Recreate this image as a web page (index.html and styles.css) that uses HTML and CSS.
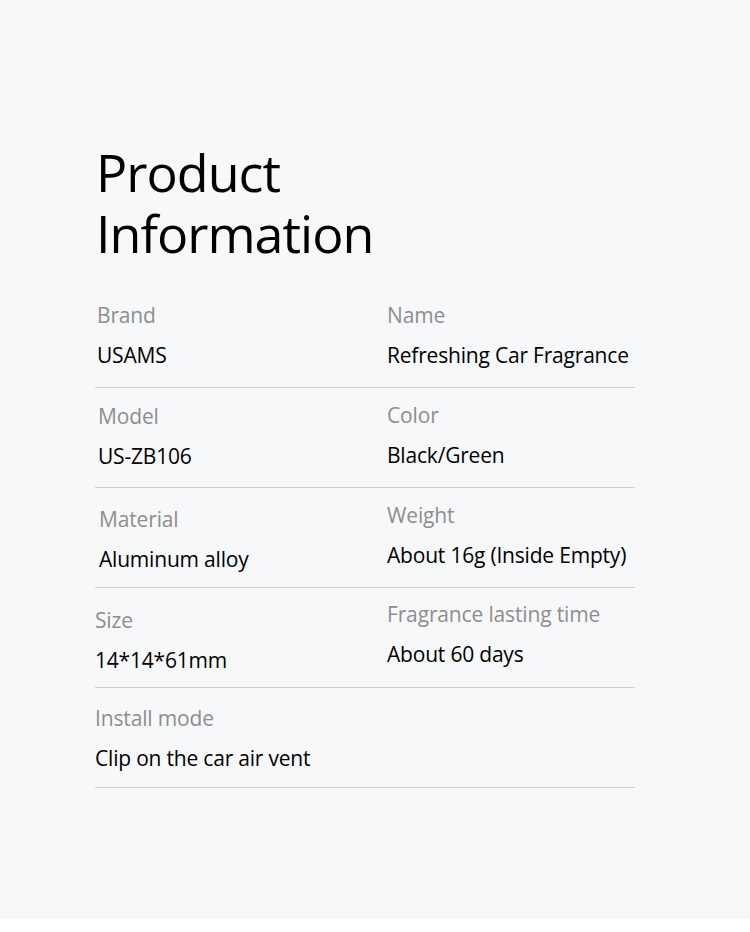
FILE: index.html
```html
<!DOCTYPE html>
<html lang="en">
<head>
<meta charset="utf-8">
<title>Product Information</title>
<link rel="stylesheet" href="styles.css">
</head>
<body>
<main class="panel">
  <h1 class="title"><span class="title-line">Product</span><span class="title-line">Information</span></h1>
  <section class="specs">
    <div class="row">
      <div class="cell cell--r1"><div class="label">Brand</div><div class="value">USAMS</div></div>
      <div class="cell"><div class="label">Name</div><div class="value">Refreshing Car Fragrance</div></div>
    </div>
    <div class="row">
      <div class="cell cell--r2"><div class="label">Model</div><div class="value">US-ZB106</div></div>
      <div class="cell"><div class="label">Color</div><div class="value">Black/Green</div></div>
    </div>
    <div class="row">
      <div class="cell cell--r3"><div class="label">Material</div><div class="value">Aluminum alloy</div></div>
      <div class="cell"><div class="label">Weight</div><div class="value">About 16g (Inside Empty)</div></div>
    </div>
    <div class="row">
      <div class="cell cell--r4"><div class="label">Size</div><div class="value">14*14*61mm</div></div>
      <div class="cell cell--up"><div class="label">Fragrance lasting time</div><div class="value">About 60 days</div></div>
    </div>
    <div class="row">
      <div class="cell cell--r5"><div class="label">Install mode</div><div class="value">Clip on the car air vent</div></div>
    </div>
  </section>
</main>
</body>
</html>
```

FILE: styles.css
```css
html, body {
  margin: 0;
  padding: 0;
  background: #ffffff;
}

body {
  font-family: "Open Sans", "Noto Sans", "Liberation Sans", sans-serif;
  color: #000;
}

.panel {
  height: 919px;
  background: #f7f8fa;
  padding: 141px 0 0 95px;
  box-sizing: border-box;
}

.title {
  margin: 0 0 0 1px;
  font-weight: 400;
  font-size: 52px;
  line-height: 61px;
  letter-spacing: -1px;
  color: #000;
}

.title-line {
  display: block;
  height: 61px;
}

.specs {
  width: 540px;
  margin-top: 25px;
}

.row {
  display: grid;
  grid-template-columns: 292px 1fr;
  height: 99px;
  border-bottom: 1px solid #cfcfd1;
}

.cell {
  padding-top: 13px;
}

.cell--r1 { padding-left: 2px; }
.cell--r2 { padding-left: 3px; padding-top: 14px; }
.cell--r3 { padding-left: 4px; padding-top: 17px; }
.cell--r4 { padding-top: 18px; }
.cell--r5 { padding-top: 16px; }
.cell--up { padding-top: 12px; }

.label {
  font-size: 21px;
  line-height: 28px;
  letter-spacing: -0.15px;
  color: #8e8e8e;
}

.value {
  margin-top: 12px;
  font-size: 21px;
  line-height: 28px;
  letter-spacing: -0.2px;
  color: #000;
}
```
